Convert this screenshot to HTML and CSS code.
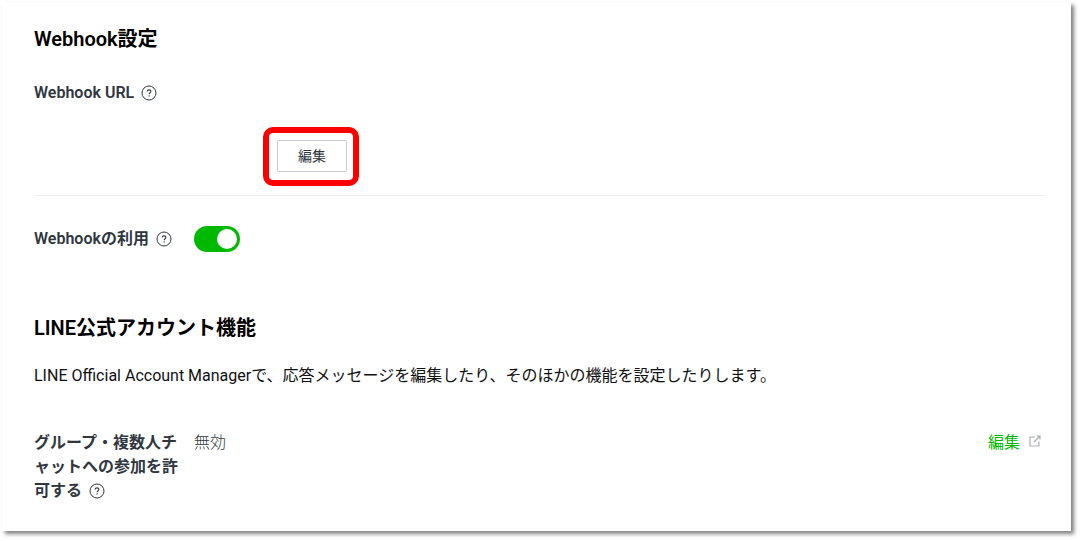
FILE: index.html
```html
<!DOCTYPE html>
<html lang="ja">
<head>
  <meta charset="UTF-8" />
  <title>Webhook設定</title>
  <meta name="viewport" content="width=device-width, initial-scale=1.0" />
  <link rel="stylesheet" href="styles.css">
</head>
<body>

<svg class="sprite" aria-hidden="true">
  <symbol id="icon-help" viewBox="0 0 16 16">
    <circle cx="8" cy="8" r="7" fill="none" stroke="currentColor" stroke-width="1" />
    <path d="M6.200 6.600C6.200 5.500 6.900 4.900 8 4.900s1.900.6 1.900 1.600c0 1.200-1.800 1.300-1.800 2.700" fill="none" stroke="currentColor" stroke-width="1.1" />
    <circle cx="8.1" cy="10.900" r=".7" fill="currentColor" />
  </symbol>
  <symbol id="icon-external" viewBox="0 0 12 12">
    <path d="M6 2H1v9h9V6.500M7.500 1H11v3.500M11 1L5 7" fill="none" stroke="currentColor" stroke-width="1.2" />
  </symbol>
</svg>

<main class="panel">
  <section class="webhook">
    <h2>Webhook設定</h2>
    <div class="url-row">
      <h3 class="label">Webhook URL <svg class="help"><use href="#icon-help" /></svg></h3>
      <div class="highlight">
        <button class="edit-button" type="button">編集</button>
      </div>
    </div>
    <div class="row use-row">
      <label class="label" for="useWebhook">Webhookの利用 <svg class="help"><use href="#icon-help" /></svg></label>
      <input class="switch" type="checkbox" id="useWebhook" checked>
    </div>
  </section>

  <section class="features">
    <h2>LINE公式アカウント機能</h2>
    <p class="description">LINE Official Account Managerで、応答メッセージを編集したり、そのほかの機能を設定したりします。</p>
    <div class="row">
      <h3 class="label">グループ・複数人チャットへの参加を許可する <svg class="help"><use href="#icon-help" /></svg></h3>
      <span class="value">無効</span>
      <a class="edit-link" href="#">編集<svg class="external"><use href="#icon-external" /></svg></a>
    </div>
  </section>
</main>

</body>
</html>
```

FILE: styles.css
```css
* {
  box-sizing: border-box;
}

body {
  margin: 0;
  padding: 2px 9px 9px 2px;
  background-color: #fff;
  color: #303740;
  font-family: Roboto, "Noto Sans CJK JP", sans-serif;
  font-size: 16px;
  line-height: 24px;
}

h2, h3, p {
  margin: 0;
}

h2 {
  color: #000;
  font-size: 20px;
  font-weight: 600;
}

.sprite {
  position: absolute;
  width: 0;
  height: 0;
}

.panel {
  padding: 25px 26px 28px 32px;
  background-color: #fff;
  box-shadow: 3px 3px 4px rgba(0, 0, 0, 0.5);
}

.label {
  width: 144px;
  flex-shrink: 0;
  font-size: 16px;
  font-weight: 600;
  line-break: loose;
}

.help {
  width: 16px;
  height: 16px;
  margin-left: 3px;
  vertical-align: -3px;
}

.url-row {
  padding: 30px 0 9px;
  border-bottom: 1px solid #efefef;
}

/* red frame around the edit button */
.highlight {
  width: 96px;
  margin: 22px 0 0 229px;
  padding: 7px 6px 8px 8px;
  border: 6px solid #f00;
  border-radius: 10px;
}

.edit-button {
  display: block;
  width: 70px;
  height: 32px;
  padding: 0 0 2px;
  border: 1px solid #c8ccd2;
  border-radius: 2px;
  background-color: #fff;
  color: #303740;
  font-family: inherit;
  font-size: 14px;
  cursor: pointer;
}

.row {
  display: flex;
  gap: 16px;
}

.use-row {
  align-items: center;
  padding: 30px 0 64px;
}

.use-row .label {
  white-space: nowrap;
}

.switch {
  appearance: none;
  width: 46px;
  height: 26px;
  margin: 0;
  padding: 3px;
  border-radius: 13px;
  background-color: #00b900;
  cursor: pointer;
}

.switch::before {
  content: "";
  display: block;
  width: 20px;
  height: 20px;
  border-radius: 50%;
  background-color: #fff;
}

.switch:checked::before {
  margin-left: auto;
}

.description {
  padding: 24px 0 43px;
  color: #111;
}

.value {
  flex: 1;
  font-weight: 300;
}

.edit-link {
  display: flex;
  align-items: flex-start;
  gap: 9px;
  padding-right: 4px;
  color: #00b900;
  text-decoration: none;
}

.external {
  width: 12px;
  height: 12px;
  margin-top: 4px;
  color: #a8adb5;
}
```
